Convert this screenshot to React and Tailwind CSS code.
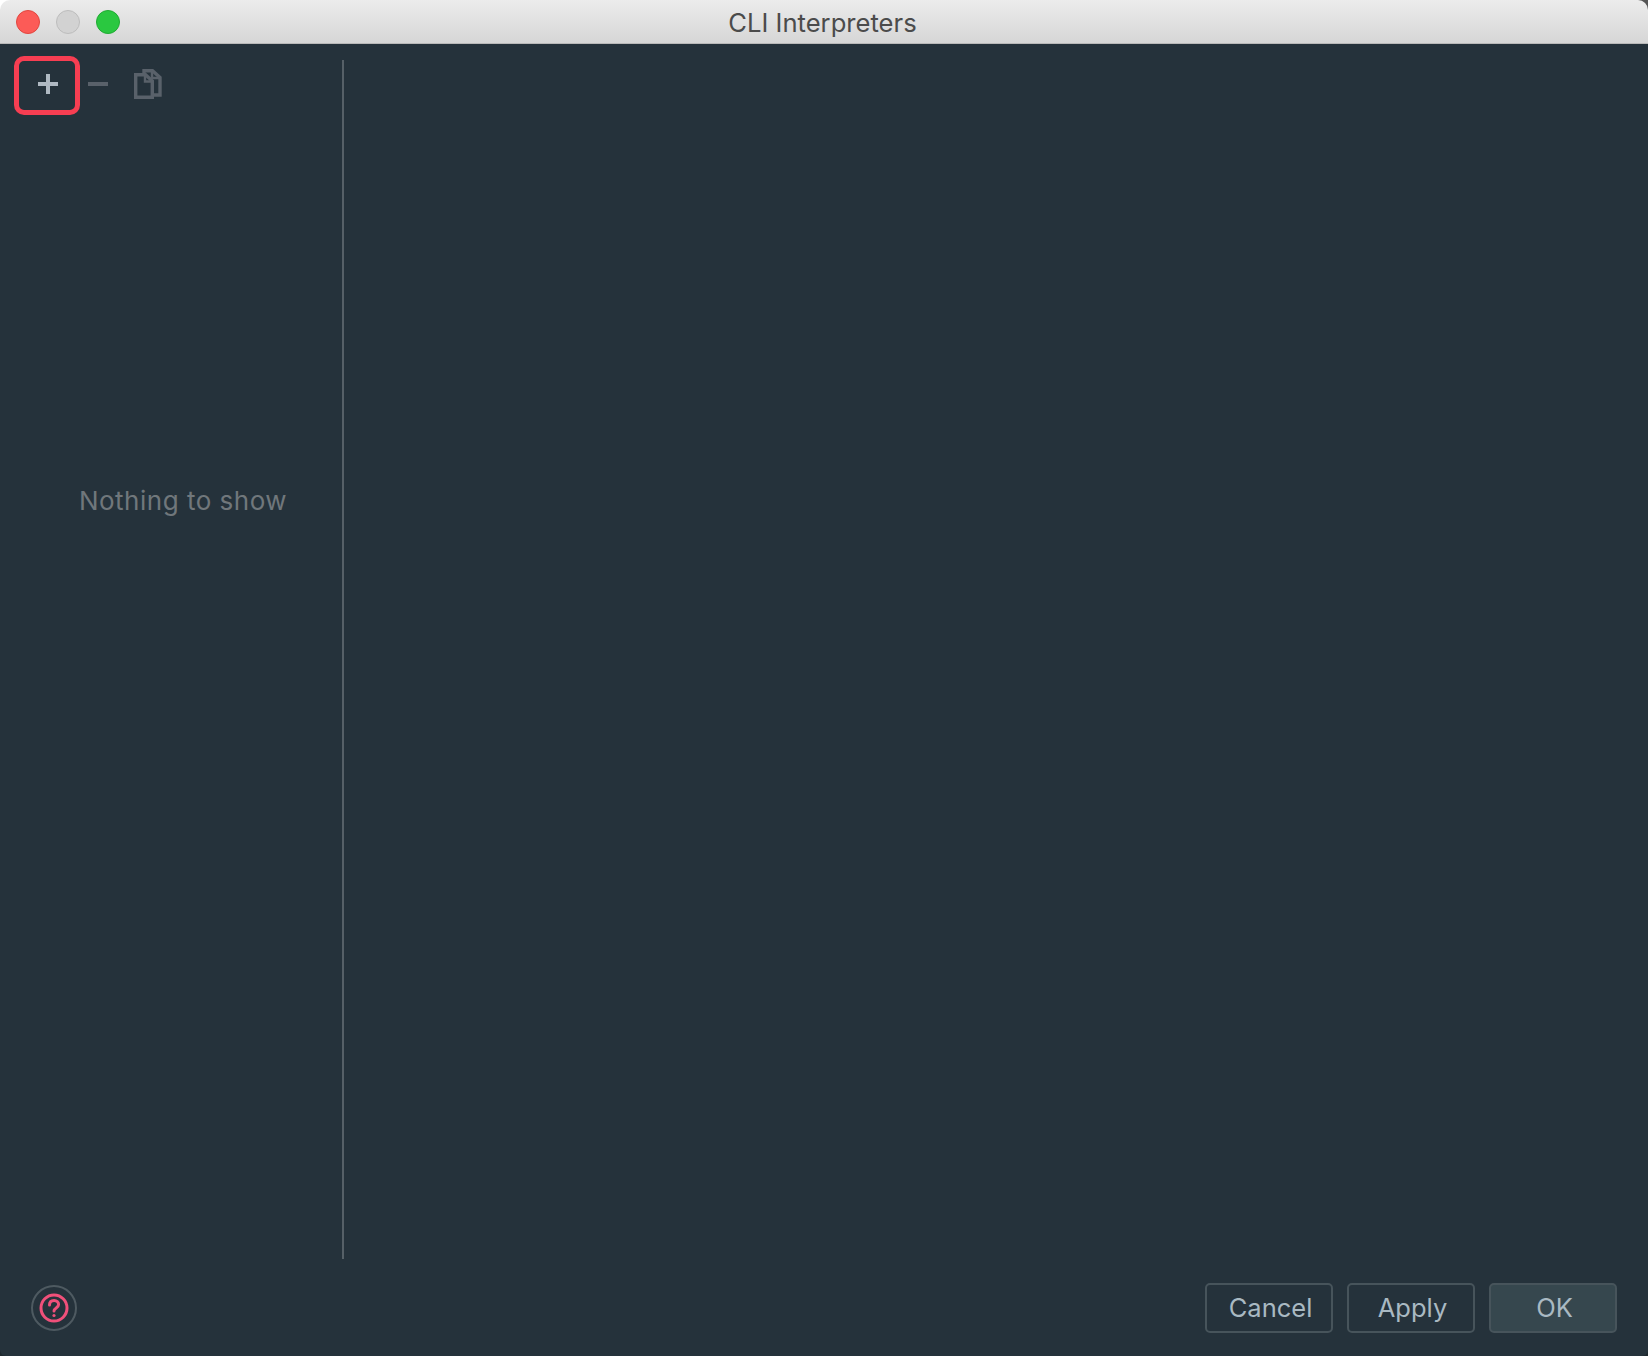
const font = "font-['Inter','Noto_Sans',sans-serif]";

function CopyIcon() {
  return (
    <svg width="28" height="30" viewBox="0 0 28 30" fill="none" stroke="#59616a" strokeWidth="3.4">
      <path d="M10 4V1.7H18.5L26 8.5V26H20" />
      <path d="M18 2V9H26" strokeWidth="2.4" />
      <path d="M1.7 5.7H11.5L18.3 12V28.3H1.7Z" />
      <path d="M11 6V12.5H18" strokeWidth="2.4" />
    </svg>
  );
}

function HelpIcon() {
  return (
    <svg width="30" height="30" viewBox="0 0 30 30" fill="none" stroke="#f0507a" strokeWidth="3" strokeLinecap="round">
      <circle cx="15" cy="15" r="13" />
      <path d="M10.5 12c0-3 2-4.6 4.6-4.6s4.5 1.7 4.5 4c0 3.6-4.6 3.4-4.6 6.6" />
      <circle cx="15" cy="22.5" r="1.6" fill="#f0507a" stroke="none" />
    </svg>
  );
}

function DialogButton({ label, primary }) {
  return (
    <button className={`w-[128px] h-[50px] pl-[3px] pt-[1px] rounded-[5px] border-2 border-[#47545b] text-[25.5px] text-[#a9b9c2] ${primary ? 'bg-[#36474e]' : 'bg-[#25323b]'}`}>
      {label}
    </button>
  );
}

export default function App() {
  return (
    <div className={`w-[1648px] h-[1356px] flex flex-col overflow-hidden bg-[#1e282e] ${font}`}>
      {/* Title bar, corners show light on the left and dark on the right */}
      <div className="shrink-0 bg-gradient-to-r from-white from-50% to-[#555555] to-50%">
        <div className="relative h-[44px] pt-[2px] pr-[3px] flex items-center justify-center rounded-t-[10px] bg-gradient-to-b from-[#ececec] to-[#d6d6d6] border-b border-[#b9b9b9]">
          <div className="absolute left-[16px] top-[10px] flex gap-[16px]">
            <span className="w-[24px] h-[24px] rounded-full bg-[#fc5b57] border border-[#e2463f]" />
            <span className="w-[24px] h-[24px] rounded-full bg-[#d2d2d2] border border-[#bdbdbd]" />
            <span className="w-[24px] h-[24px] rounded-full bg-[#2ac840] border border-[#20ab33]" />
          </div>
          <span className="text-[25.6px] leading-none text-[#4b4b4b]">CLI Interpreters</span>
        </div>
      </div>

      <div className="flex-1 min-h-0 flex flex-col bg-[#25323b] rounded-b-[6px]">
        {/* Main split */}
        <div className="flex-1 min-h-0 flex pt-[16px]">
          <div className="w-[344px] shrink-0 flex flex-col border-r-2 border-[#566067]">
            <div className="flex items-center pl-[14px] -mt-[4px]">
              <div className="w-[66px] h-[59px] flex items-center justify-center rounded-[10px] border-[5px] border-[#f73e52]">
                <svg className="ml-[2px] mb-[3px]" width="20" height="20" viewBox="0 0 20 20" fill="#afb9c2">
                  <rect x="8" y="0" width="4" height="20" />
                  <rect x="0" y="8" width="20" height="4" />
                </svg>
              </div>
              <span className="ml-[8px] w-[20px] h-[4px] mb-[4px] bg-[#59616a]" />
              <span className="ml-[26px] mb-[4px]"><CopyIcon /></span>
            </div>
            <div className="flex-1 flex items-center justify-center pb-[374px]">
              <span className="pl-[24px] text-[26px] tracking-[0.5px] text-[#70777b]">Nothing to show</span>
            </div>
          </div>
        </div>

        {/* Footer */}
        <div className="h-[97px] shrink-0 flex items-center justify-between pl-[31px] pr-[31px]">
          <div className="w-[46px] h-[46px] rounded-full border-2 border-[#4e5a61] flex items-center justify-center">
            <HelpIcon />
          </div>
          <div className="flex gap-[14px]">
            <DialogButton label="Cancel" />
            <DialogButton label="Apply" />
            <DialogButton label="OK" primary />
          </div>
        </div>
      </div>
    </div>
  );
}
